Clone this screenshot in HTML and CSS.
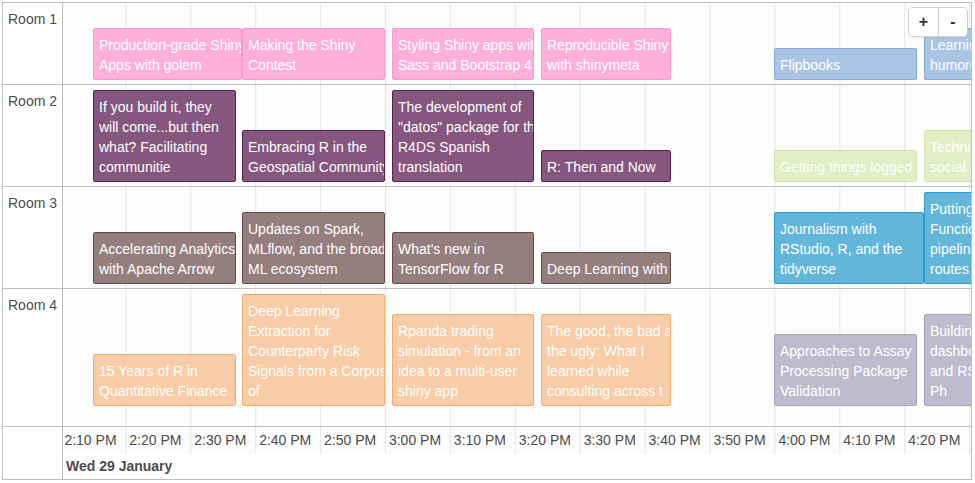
FILE: index.html
```html
<!DOCTYPE html>
<html>
<head>
<meta charset="utf-8">
<link rel="stylesheet" href="styles.css">
</head>
<body>
<div class="timeline">
  <div class="row row-1">
    <div class="label">Room 1</div>
    <div class="track">
      <div class="item pink" style="left:30px;width:149px">Production-grade Shiny<br>Apps with golem</div>
      <div class="item pink" style="left:179px;width:143px">Making the Shiny<br>Contest</div>
      <div class="item pink" style="left:329px;width:142px">Styling Shiny apps with<br>Sass and Bootstrap 4</div>
      <div class="item pink" style="left:478px;width:130px">Reproducible Shiny apps<br>with shinymeta</div>
      <div class="item blue" style="left:711px;width:143px">Flipbooks</div>
      <div class="item blue" style="left:861px;width:143px">Learning R with<br>humorous side projects</div>
    </div>
  </div>
  <div class="row row-2">
    <div class="label">Room 2</div>
    <div class="track">
      <div class="item purple" style="left:30px;width:143px">If you build it, they<br>will come...but then<br>what? Facilitating<br>communitie</div>
      <div class="item purple" style="left:179px;width:143px">Embracing R in the<br>Geospatial Community</div>
      <div class="item purple" style="left:329px;width:142px">The development of<br>"datos" package for the<br>R4DS Spanish<br>translation</div>
      <div class="item purple" style="left:478px;width:130px">R: Then and Now</div>
      <div class="item green" style="left:711px;width:143px">Getting things logged</div>
      <div class="item green" style="left:861px;width:143px">Technical debt is a<br>social problem</div>
    </div>
  </div>
  <div class="row row-3">
    <div class="label">Room 3</div>
    <div class="track">
      <div class="item brown" style="left:30px;width:143px">Accelerating Analytics<br>with Apache Arrow</div>
      <div class="item brown" style="left:179px;width:143px">Updates on Spark,<br>MLflow, and the broader<br>ML ecosystem</div>
      <div class="item brown" style="left:329px;width:142px">What's new in<br>TensorFlow for R</div>
      <div class="item brown" style="left:478px;width:130px">Deep Learning with R</div>
      <div class="item cyan" style="left:711px;width:150px">Journalism with<br>RStudio, R, and the<br>tidyverse</div>
      <div class="item cyan" style="left:861px;width:143px">Putting the Fun in<br>Functional Data: A tidy<br>pipeline to identify<br>routes in NFL data</div>
    </div>
  </div>
  <div class="row row-4">
    <div class="label">Room 4</div>
    <div class="track">
      <div class="item orange" style="left:30px;width:143px">15 Years of R in<br>Quantitative Finance</div>
      <div class="item orange" style="left:179px;width:143px">Deep Learning<br>Extraction for<br>Counterparty Risk<br>Signals from a Corpus<br>of</div>
      <div class="item orange" style="left:329px;width:142px">Rpanda trading<br>simulation - from an<br>idea to a multi-user<br>shiny app</div>
      <div class="item orange" style="left:478px;width:130px">The good, the bad and<br>the ugly: What I<br>learned while<br>consulting across t</div>
      <div class="item lavender" style="left:711px;width:143px">Approaches to Assay<br>Processing Package<br>Validation</div>
      <div class="item lavender" style="left:861px;width:143px">Building<br>dashboards in Shiny<br>and RStudio Connect<br>Ph</div>
    </div>
  </div>
  <div class="axis">
    <div class="label"></div>
    <div class="axis-track">
      <div class="minor">
        <span class="tick">2:10 PM</span>
        <span class="tick">2:20 PM</span>
        <span class="tick">2:30 PM</span>
        <span class="tick">2:40 PM</span>
        <span class="tick">2:50 PM</span>
        <span class="tick">3:00 PM</span>
        <span class="tick">3:10 PM</span>
        <span class="tick">3:20 PM</span>
        <span class="tick">3:30 PM</span>
        <span class="tick">3:40 PM</span>
        <span class="tick">3:50 PM</span>
        <span class="tick">4:00 PM</span>
        <span class="tick">4:10 PM</span>
        <span class="tick">4:20 PM</span>
      </div>
      <div class="major">Wed 29 January</div>
    </div>
  </div>
  <div class="zoom">
    <button class="zbtn">+</button>
    <button class="zbtn">-</button>
  </div>
</div>
</body>
</html>
```

FILE: styles.css
```css
* { box-sizing: border-box; }
html, body { margin: 0; padding: 0; background: #fff; }
body { padding: 2px; font-family: "Liberation Sans", Arial, sans-serif; font-size: 14px; color: #4d4d4d; }

.timeline {
  position: relative;
  width: 970px;
  height: 478px;
  border: 1px solid #bfbfbf;
  display: flex;
  flex-direction: column;
  overflow: hidden;
}

.row {
  display: flex;
  border-bottom: 1px solid #bfbfbf;
  flex: none;
}
.row-1 { height: 82px; }
.row-2 { height: 102px; }
.row-3 { height: 102px; }
.row-4 { height: 138px; }

.label {
  width: 60px;
  flex: none;
  border-right: 1px solid #bfbfbf;
  padding: 6px 0 0 5px;
  line-height: 20px;
  color: #4d4d4d;
  background: #fff;
}

.track, .minor {
  background-color: #fcfcfc;
  background-image: linear-gradient(to right, #e5e5e5 0, #e5e5e5 1px, transparent 1px);
  background-size: 64.92px 100%;
  background-position: 62.4px 0;
  background-repeat: repeat-x;
}

.track {
  position: relative;
  flex: 1;
  overflow: hidden;
}

.item {
  position: absolute;
  bottom: 4px;
  padding: 6px 5px 4px 5px;
  border: 1px solid;
  border-radius: 2px;
  color: #fff;
  line-height: 20px;
  white-space: nowrap;
  overflow: hidden;
  opacity: 0.92;
}
.row-4 .item { bottom: 20px; }

.pink { background: #ffaad8; border-color: #fb8fca; }
.purple { background: #7b4a74; border-color: #4a0f41; }
.brown { background: #8d7474; border-color: #5e3a3a; }
.orange { background: #f8c9a0; border-color: #f5a65e; }
.blue { background: #a4c1e3; border-color: #7aa6da; }
.green { background: #e0edbf; border-color: #d0e3a1; }
.cyan { background: #55b1d8; border-color: #1a95c7; }
.lavender { background: #bab6cb; border-color: #9e98ba; }

.axis {
  display: flex;
  flex: 1;
}
.axis-track {
  flex: 1;
  display: flex;
  flex-direction: column;
  overflow: hidden;
}
.minor {
  height: 27px;
  display: flex;
  flex: none;
}
.tick {
  flex: none;
  width: 64.92px;
  padding-left: 4px;
  line-height: 27px;
  white-space: nowrap;
  color: #4d4d4d;
}
.tick:first-child { margin-left: -2.6px; }
.major {
  flex: 1;
  background: #fff;
  font-weight: bold;
  padding-left: 3px;
  line-height: 25px;
  color: #4d4d4d;
}

.zoom {
  position: absolute;
  top: 4px;
  right: 3px;
  display: flex;
  border: 1px solid #d0d0d0;
  border-radius: 5px;
  background: #fff;
  overflow: hidden;
  box-shadow: 0 1px 1px rgba(0,0,0,0.05);
}
.zbtn {
  width: 29px;
  height: 28px;
  border: none;
  background: #fff;
  font-family: "Liberation Sans", Arial, sans-serif;
  font-size: 16px;
  font-weight: bold;
  color: #333;
  padding: 0;
  line-height: 28px;
}
.zbtn + .zbtn { border-left: 1px solid #d0d0d0; }
```
